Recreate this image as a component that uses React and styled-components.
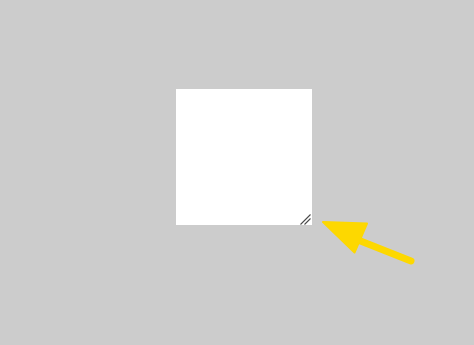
import React from 'react';
import styled, {createGlobalStyle} from 'styled-components';

const GlobalStyle = createGlobalStyle`
    html, body {
        margin: 0;
        padding: 0;
        background: #cccccc;
    }
    body {
        font-family: "Liberation Sans", Arial, sans-serif;
    }
`;

const Stage = styled.div`
    position: relative;
    width: 474px;
    height: 345px;
    box-sizing: border-box;
    padding: 89px 0 0 176px;
    background: #cccccc;
    overflow: hidden;
`;

const ResizableBox = styled.div`
    position: relative;
    width: 136px;
    height: 136px;
    background: #ffffff;
    resize: both;
    overflow: auto;

    &::-webkit-resizer {
        background: transparent;
    }
`;

// drawn grip, the native one is smaller than in the picture
const Grip = styled.svg`
    position: absolute;
    right: 0;
    bottom: 0;
    pointer-events: none;
`;

const Annotation = styled.svg`
    position: absolute;
    left: 0;
    top: 0;
    pointer-events: none;
`;

const ARROW = '#fdd800';

const App = () => (
    <>
        <GlobalStyle/>
        <Stage>
            <ResizableBox>
                <Grip width="14" height="14" viewBox="0 0 14 14">
                    <line x1="2.5" y1="13.5" x2="12.5" y2="3.5" stroke="#4a4a4a" strokeWidth="1.1"/>
                    <line x1="6.5" y1="13.5" x2="12.5" y2="7.5" stroke="#4a4a4a" strokeWidth="1.1"/>
                </Grip>
            </ResizableBox>
            <Annotation width="474" height="345" viewBox="0 0 474 345">
                <line x1="358" y1="240" x2="411" y2="261" stroke={ARROW} strokeWidth="7" strokeLinecap="round"/>
                <polygon points="323,222 367,223.5 354.5,252.5" fill={ARROW} stroke={ARROW}
                         strokeWidth="2" strokeLinejoin="round"/>
            </Annotation>
        </Stage>
    </>
);

export default App;
